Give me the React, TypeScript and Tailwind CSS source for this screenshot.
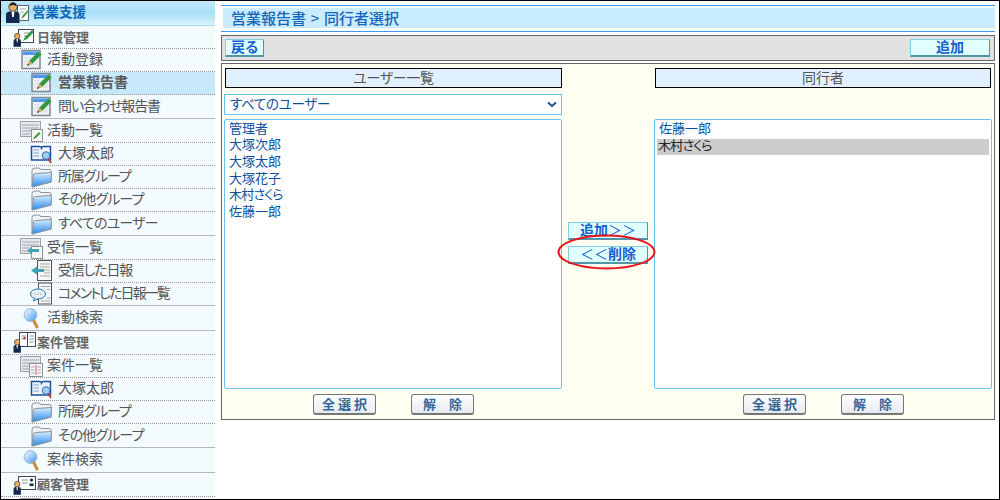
import React from "react";

type IconKind = "pen" | "penlist" | "book" | "folder" | "inbox" | "back" | "comment" | "search" | "caselist" | "userdaily" | "usercase" | "usercustomer";

function Person({ x = 0, y = 0, s = 1 }: { x?: number; y?: number; s?: number }) {
  return (
    <g transform={`translate(${x} ${y}) scale(${s})`}>
      <circle cx="4" cy="3" r="2.6" fill="#e8b060" stroke="#222" strokeWidth="0.6" />
      <path d="M0.5 13 V7.5 Q0.5 5.8 2.4 5.6 H5.6 Q7.5 5.8 7.5 7.5 V13 Z" fill="#13284e" />
      <path d="M3.3 5.8 H4.7 L4.3 9 H3.7 Z" fill="#fff" />
    </g>
  );
}

function PenStroke({ x = 0, y = 0 }: { x?: number; y?: number }) {
  return (
    <g transform={`translate(${x} ${y})`}>
      <path d="M1 15 L3.5 9.5 L12.5 0.5 L15.5 3.5 L6.5 12.5 Z" fill="#2f9a3c" />
      <path d="M1 15 L3.5 9.5 L6.5 12.5 Z" fill="#d9a766" />
      <path d="M1 15 L2 12.8 L3.2 14 Z" fill="#333" />
    </g>
  );
}

function Icon({ kind }: { kind: IconKind }) {
  const common = { width: 24, height: 22, viewBox: "0 0 24 22", className: "shrink-0 overflow-visible" };
  switch (kind) {
    case "pen":
      return (
        <svg {...common}>
          <rect x="1" y="1.5" width="18" height="18" fill="#eef2f6" stroke="#7d8790" strokeWidth="1.5" />
          <rect x="2" y="2.5" width="16" height="3.5" fill="#4f97ea" />
          <path d="M3 9 H17 M3 12 H17 M3 15 H17" stroke="#d3dce4" />
          <PenStroke x={5} y={2} />
        </svg>
      );
    case "penlist":
      return (
        <svg {...common}>
          <rect x="-0.5" y="1.5" width="20" height="15" fill="#e6e9ed" stroke="#9aa1a8" />
          <path d="M1 5 H18 M1 8 H18 M1 11 H18 M1 14 H9" stroke="#9fa7ae" />
          <rect x="10.5" y="9.5" width="11" height="12" fill="#f6f6f6" stroke="#8b9095" />
          <path d="M12 19.5 L13.5 16.5 L18 12 L19.5 13.5 L15 18 Z" fill="#3c9a3c" />
        </svg>
      );
    case "book":
      return (
        <svg {...common}>
          <path d="M0.5 3.5 H8.5 Q10 3.5 10.5 5 Q11 3.5 12.5 3.5 H19.5 V17 H0.5 Z" fill="#eef3fb" stroke="#1f4fa0" strokeWidth="1.5" />
          <path d="M2.5 7 H8 M2.5 10 H8 M2.5 13 H8" stroke="#7aa2d8" />
          <circle cx="15" cy="12.5" r="3.8" fill="#9ad0f5" stroke="#4a6f9a" />
          <path d="M17.5 15.5 L20 20" stroke="#c0392b" strokeWidth="1.6" />
        </svg>
      );
    case "folder":
      return (
        <svg {...common}>
          <defs>
            <linearGradient id="folderGrad" x1="0" y1="0" x2="0" y2="1">
              <stop offset="0" stopColor="#d9eefc" />
              <stop offset="1" stopColor="#2488ef" />
            </linearGradient>
          </defs>
          <path d="M1 4.5 Q1 2 4 2 H8 L10 3.5 H18.5 Q20 3.5 20 5 V16 L1 21 Z" fill="#f1f3f5" stroke="#8c9298" />
          <path d="M1 21 L2.5 8.5 Q2.7 7.5 4.5 7.5 L20.5 6.5 L20 16 Z" fill="url(#folderGrad)" stroke="#8c9298" />
        </svg>
      );
    case "inbox":
      return (
        <svg {...common}>
          <rect x="-0.5" y="1.5" width="20" height="15" fill="#e6e9ed" stroke="#9aa1a8" />
          <path d="M1 5 H18 M1 8 H18 M1 11 H9 M1 14 H9" stroke="#9fa7ae" />
          <rect x="10.5" y="9.5" width="11" height="12" fill="#f6f6f6" stroke="#8b9095" />
          <path d="M6 13.5 L11 10 V12 H18 V15 H11 V17 Z" fill="#3fa3b4" />
        </svg>
      );
    case "back":
      return (
        <svg {...common}>
          <rect x="6.5" y="0.5" width="14" height="20" fill="#f6f6f6" stroke="#555" />
          <path d="M9 4 H19 M9 7 H19 M13 10 H19 M13 13 H19 M9 16 H19" stroke="#a6a6a6" />
          <path d="M0 10.5 L6 6.5 V9 H13 V12 H6 V14.5 Z" fill="#3fa3b4" />
        </svg>
      );
    case "comment":
      return (
        <svg {...common}>
          <rect x="7.5" y="0" width="13" height="21" fill="#f6f6f6" stroke="#555" />
          <path d="M10 3.5 H19 M16 6.5 H19 M16 15 H19 M10 18 H19" stroke="#a6a6a6" />
          <ellipse cx="7" cy="11" rx="7.5" ry="5" fill="#e8f4fc" stroke="#2f6fb0" />
          <path d="M3.5 15 L2.5 18 L7 16" fill="#e8f4fc" stroke="#2f6fb0" />
          <circle cx="4" cy="11" r="0.7" fill="#999" />
          <circle cx="7" cy="11" r="0.7" fill="#999" />
          <circle cx="10" cy="11" r="0.7" fill="#999" />
        </svg>
      );
    case "search":
      return (
        <svg {...common}>
          <defs>
            <linearGradient id="lensGrad" x1="0" y1="0" x2="1" y2="1">
              <stop offset="0" stopColor="#ffffff" />
              <stop offset="1" stopColor="#3f9bef" />
            </linearGradient>
          </defs>
          <circle cx="9.5" cy="8" r="6.4" fill="url(#lensGrad)" stroke="#9db4c8" />
          <path d="M13 14 L16 20" stroke="#d08a3c" strokeWidth="3" strokeLinecap="round" />
        </svg>
      );
    case "caselist":
      return (
        <svg {...common}>
          <rect x="-0.5" y="1.5" width="20" height="15" fill="#e6e9ed" stroke="#9aa1a8" />
          <path d="M1 5 H18 M1 8 H18 M1 11 H8 M1 14 H8" stroke="#9fa7ae" />
          <rect x="8.5" y="8.5" width="13" height="13" fill="#f6f6f6" stroke="#8b9095" />
          <path d="M15 10 V20" stroke="#d0506a" />
          <path d="M10 12 H13.5 M16.5 12 H20 M10 15 H13.5 M16.5 15 H20 M10 18 H13.5 M16.5 18 H20" stroke="#9fa7ae" />
        </svg>
      );
    case "userdaily":
      return (
        <svg {...common}>
          <rect x="6.5" y="3.5" width="15" height="13" fill="#fff" stroke="#3d4852" />
          <path d="M12 7 H18 M12 10 H16" stroke="#8a949c" />
          <path d="M11 15 L13 11 L20 4 L22 6 L15 13 Z" fill="#2f9a3c" />
          <Person x={1} y={7} s={1.05} />
        </svg>
      );
    case "usercase":
      return (
        <svg {...common}>
          <rect x="7.5" y="0.5" width="16" height="14" fill="#fff" stroke="#3d4852" />
          <path d="M15.5 0.5 V14.5" stroke="#3d4852" />
          <path d="M9.5 4 H14 M9.5 7 H14 M17.5 4 H22 M17.5 7 H22 M17.5 10 H22" stroke="#8a949c" />
          <circle cx="12.5" cy="6" r="1.2" fill="#c0392b" />
          <Person x={1} y={7} s={1.05} />
        </svg>
      );
    case "usercustomer":
      return (
        <svg {...common}>
          <rect x="6.5" y="2.5" width="17" height="13" fill="#fff" stroke="#3d4852" />
          <path d="M10 6 H16 M10 9 H16" stroke="#8a949c" />
          <circle cx="19.5" cy="6" r="1.6" fill="#13284e" />
          <path d="M17.5 12 V9.5 H21.5 V12 Z" fill="#13284e" />
          <Person x={1} y={7} s={1.05} />
        </svg>
      );
    default:
      return null;
  }
}

function HeadIcon() {
  return (
    <svg width="24" height="24" viewBox="0 0 24 24" className="shrink-0">
      <rect x="12.5" y="4.5" width="11" height="15" fill="#fff" stroke="#5a6a78" />
      <path d="M15 8 H21 M15 11 H19" stroke="#9aa5ae" />
      <path d="M16 18 L18 14 L23 9 L24 10 L19 16 Z" fill="#3c9a3c" />
      <circle cx="8" cy="6" r="4.2" fill="#e8b060" stroke="#222" strokeWidth="0.8" />
      <path d="M5 3 Q8 0 11 3 L11 5 Q8 3 5 5 Z" fill="#222" />
      <path d="M1 22 V14 Q1 11 4 10.5 H12 Q14.5 11 14.5 14 V22 Z" fill="#13284e" />
      <path d="M6.5 10.5 H9.5 L8.8 16 H7.2 Z" fill="#fff" />
    </svg>
  );
}

type Row = { label: string; icon: IconKind; level: 0 | 1 | 2; h: number; solid?: boolean; active?: boolean; track?: string };

const rows: Row[] = [
  { label: "日報管理", icon: "userdaily", level: 0, h: 23 },
  { label: "活動登録", icon: "pen", level: 1, h: 23 },
  { label: "営業報告書", icon: "pen", level: 2, h: 23, active: true },
  { label: "問い合わせ報告書", icon: "pen", level: 2, h: 24, solid: true, track: "tracking-[-1.1px]" },
  { label: "活動一覧", icon: "penlist", level: 1, h: 24 },
  { label: "大塚太郎", icon: "book", level: 2, h: 23 },
  { label: "所属グループ", icon: "folder", level: 2, h: 23, track: "tracking-[-1.2px]" },
  { label: "その他グループ", icon: "folder", level: 2, h: 23, track: "tracking-[-0.9px]" },
  { label: "すべてのユーザー", icon: "folder", level: 2, h: 24, solid: true, track: "tracking-[-0.8px]" },
  { label: "受信一覧", icon: "inbox", level: 1, h: 24 },
  { label: "受信した日報", icon: "back", level: 2, h: 23, track: "tracking-[-1.2px]" },
  { label: "コメントした日報一覧", icon: "comment", level: 2, h: 23, solid: true, track: "tracking-[-1.9px]" },
  { label: "活動検索", icon: "search", level: 1, h: 25, solid: true },
  { label: "案件管理", icon: "usercase", level: 0, h: 24 },
  { label: "案件一覧", icon: "caselist", level: 1, h: 23 },
  { label: "大塚太郎", icon: "book", level: 2, h: 23 },
  { label: "所属グループ", icon: "folder", level: 2, h: 23, track: "tracking-[-1.2px]" },
  { label: "その他グループ", icon: "folder", level: 2, h: 24, solid: true, track: "tracking-[-0.9px]" },
  { label: "案件検索", icon: "search", level: 1, h: 25, solid: true },
  { label: "顧客管理", icon: "usercustomer", level: 0, h: 24 },
];

function SideRow({ row }: { row: Row }) {
  const indent =
    row.level === 0 ? "pl-[11px] gap-[1px]" : row.level === 1 ? "pl-[20px] gap-[2px]" : "pl-[30px] gap-[3px]";
  const text =
    row.level === 0
      ? "pb-[2px] text-[13px] font-bold text-[#666666]"
      : row.active
        ? "pb-[4px] text-[14px] font-bold text-[#5a5a5a]"
        : "pb-[4px] text-[14px] text-[#555555]";
  return (
    <div
      style={{ height: row.h }}
      className={`flex shrink-0 items-center border-b ${indent} ${
        row.solid ? "border-solid border-[#b4b8bb]" : "border-dotted border-[#9a9a9a]"
      } ${row.active ? "bg-[#c8e9fa]" : ""}`}
    >
      <Icon kind={row.icon} />
      <span className={`${text} ${row.track ?? ""} leading-none whitespace-nowrap`}>{row.label}</span>
    </div>
  );
}

function CyanButton({ children, className = "" }: { children: React.ReactNode; className?: string }) {
  return (
    <button
      className={`flex h-[18px] items-center justify-center border border-[#7fd0e4] border-r-[#4f97a8] border-b-2 border-b-[#4f97a8] bg-[#e2ffff] pb-[4px] text-[14px] leading-none font-bold text-[#1560d0] ${className}`}
    >
      {children}
    </button>
  );
}

function Chevrons({ children }: { children: React.ReactNode }) {
  return <span className="font-normal [font-feature-settings:normal]">{children}</span>;
}

function GrayButton({ children }: { children: React.ReactNode }) {
  return (
    <button className="flex h-[21px] w-[63px] items-center justify-center rounded-[3px] border border-[#777777] border-b-2 bg-gradient-to-b from-white to-[#e6eaf0] pb-[2px] text-[13px] leading-none font-bold whitespace-pre text-[#336699]">
      {children}
    </button>
  );
}

function ListBox({ children }: { children: React.ReactNode }) {
  return (
    <div className="mt-[4px] h-[270px] w-[338px] rounded-[2px] border border-[#66c4f5] bg-white px-[2px] pt-[2px] text-[13px] text-[#0b4f9e]">
      {children}
    </div>
  );
}

function Item({ children, selected, narrow }: { children: React.ReactNode; selected?: boolean; narrow?: boolean }) {
  return (
    <div
      className={`flex h-[16.6px] items-center leading-none whitespace-nowrap ${narrow ? "tracking-[-0.8px]" : ""} ${
        selected ? "bg-[#cccccc] pb-[4px] pl-px text-[#222222]" : "pb-[6px] pl-[2px]"
      }`}
    >
      {children}
    </div>
  );
}

function ColumnHeader({ children, className = "" }: { children: React.ReactNode; className?: string }) {
  return (
    <div className={`flex h-[20px] items-center justify-center border border-black bg-[#e1f0ff] pb-[2px] text-[14px] leading-none text-[#555555] ${className}`}>
      {children}
    </div>
  );
}

export default function App() {
  return (
    <div className="flex h-[500px] w-[1000px] overflow-hidden border border-black bg-white font-['Noto_Sans_CJK_JP','Noto_Sans',sans-serif] [font-feature-settings:'palt']">
      <aside className="flex w-[214px] shrink-0 flex-col overflow-hidden bg-[#f3fbff]">
        <div className="flex h-[25px] shrink-0 items-center gap-[3px] border-b border-[#a4dcf2] bg-gradient-to-b from-[#bfe8fa] via-[#a9e0f7] to-[#d8f2fd] pl-[4px]">
          <HeadIcon />
          <span className="pb-[2px] text-[13.5px] leading-none font-bold text-[#1068b8]">営業支援</span>
        </div>
        {rows.map((row, i) => (
          <SideRow key={i} row={row} />
        ))}
        <div className="flex h-[23px] shrink-0 items-start pl-[20px]">
          <Icon kind="penlist" />
        </div>
      </aside>

      <main className="ml-[6px] flex w-[774px] shrink-0 flex-col pt-[4px]">
        <div className="h-[27px] border-y border-[#3b99f0] py-[2px]">
          <div className="ml-[2px] flex h-[20px] items-center bg-[#c9ecff] pb-[2px] pl-[8px] text-[15px] leading-none font-medium whitespace-pre text-[#1565b8]">
            営業報告書<span className="inline-block w-[18px] text-center font-normal">&gt;</span>同行者選択
          </div>
        </div>

        <div className="mt-[3px] flex h-[26px] items-center justify-between border border-[#666666] bg-[#e2e2e2] pr-[4px] pl-[3px]">
          <CyanButton className="w-[39px]">戻る</CyanButton>
          <CyanButton className="w-[80px]">追加</CyanButton>
        </div>

        <div className="mt-[2px] flex h-[357px] border border-[#666666] bg-[#fffff2] pt-[4px] pl-[2px]">
          <section className="flex w-[338px] flex-col">
            <ColumnHeader className="ml-px w-[337px] tracking-[-0.3px]">ユーザー一覧</ColumnHeader>
            <div className="mt-[6px] flex h-[21px] items-center justify-between border border-[#66c4f5] bg-white pr-[4px] pb-[1px] pl-[5px] text-[13.5px] leading-none tracking-[-0.3px] text-[#0b4f9e]">
              <span className="pb-[1px]">すべてのユーザー</span>
              <svg width="10" height="7" viewBox="0 0 10 7">
                <path d="M1 1.5 L5 5 L9 1.5" fill="none" stroke="#1f4e8c" strokeWidth="2" />
              </svg>
            </div>
            <ListBox>
              <Item>管理者</Item>
              <Item>大塚次郎</Item>
              <Item>大塚太郎</Item>
              <Item>大塚花子</Item>
              <Item narrow>木村さくら</Item>
              <Item>佐藤一郎</Item>
            </ListBox>
            <div className="mt-[5px] flex justify-center gap-[35px] pl-px">
              <GrayButton>全 選 択</GrayButton>
              <GrayButton>解　除</GrayButton>
            </div>
          </section>

          <section className="relative flex w-[92px] flex-col items-center pt-[154px]">
            <CyanButton className="w-[80px]">
              追加<Chevrons>＞＞</Chevrons>
            </CyanButton>
            <CyanButton className="mt-[6px] w-[80px]">
              <Chevrons>＜＜</Chevrons>削除
            </CyanButton>
            <svg className="absolute top-[166px] left-[-6px]" width="102" height="38" viewBox="0 0 102 38">
              <ellipse cx="50.5" cy="18" rx="48" ry="16.5" fill="none" stroke="#e8141c" strokeWidth="2" />
            </svg>
          </section>

          <section className="flex w-[338px] flex-col">
            <ColumnHeader className="ml-px w-[336px]">同行者</ColumnHeader>
            <div className="mt-[6px] h-[21px]" />
            <ListBox>
              <Item>佐藤一郎</Item>
              <Item selected narrow>
                木村さくら
              </Item>
            </ListBox>
            <div className="mt-[5px] flex justify-center gap-[35px] pl-px">
              <GrayButton>全 選 択</GrayButton>
              <GrayButton>解　除</GrayButton>
            </div>
          </section>
        </div>
      </main>
    </div>
  );
}
